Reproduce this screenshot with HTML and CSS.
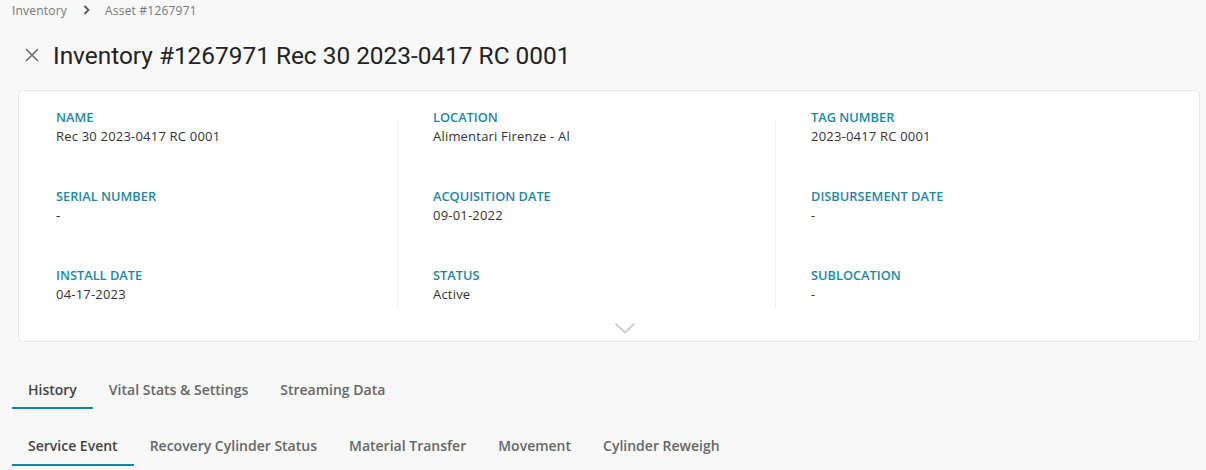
FILE: index.html
```html
<!DOCTYPE html>
<html lang="en">
<head>
    <meta charset="UTF-8">
    <meta name="viewport" content="width=device-width, initial-scale=1.0">
    <title>Asset #1267971</title>
    <link rel="stylesheet" href="styles.css">
</head>
<body>
    <!-- breadcrumb -->
    <div class="crumbs">
        <a href="javascript:;">Inventory</a>
        <svg class="crumb_sep" width="7" height="10" viewBox="0 0 7 10"><path d="M1.5 1l4 4-4 4" fill="none" stroke="#555" stroke-width="1.8"/></svg>
        <span>Asset #1267971</span>
    </div>

    <div class="title_row">
        <a href="javascript:;" class="close_btn">
            <svg width="14" height="14" viewBox="0 0 14 14"><path d="M1 1l12 12M13 1L1 13" stroke="#6b6b6b" stroke-width="1.6"/></svg>
        </a>
        <h1>Inventory #1267971 Rec 30 2023-0417 RC 0001</h1>
    </div>

    <div class="card">
        <div class="cols">
            <div class="col">
                <div class="field"><div class="label">NAME</div><div class="value">Rec 30 2023-0417 RC 0001</div></div>
                <div class="field"><div class="label">SERIAL NUMBER</div><div class="value">-</div></div>
                <div class="field"><div class="label">INSTALL DATE</div><div class="value">04-17-2023</div></div>
            </div>
            <div class="col">
                <div class="field"><div class="label">LOCATION</div><div class="value">Alimentari Firenze - Al</div></div>
                <div class="field"><div class="label">ACQUISITION DATE</div><div class="value">09-01-2022</div></div>
                <div class="field"><div class="label">STATUS</div><div class="value">Active</div></div>
            </div>
            <div class="col">
                <div class="field"><div class="label">TAG NUMBER</div><div class="value">2023-0417 RC 0001</div></div>
                <div class="field"><div class="label">DISBURSEMENT DATE</div><div class="value">-</div></div>
                <div class="field"><div class="label">SUBLOCATION</div><div class="value">-</div></div>
            </div>
        </div>
        <div class="more">
            <svg width="22" height="12" viewBox="0 0 22 12"><path d="M1.5 1.5l9.5 9 9.5-9" fill="none" stroke="#cfcfcf" stroke-width="2"/></svg>
        </div>
    </div>

    <ul class="tabs">
        <li class="active"><a href="javascript:;">History</a></li>
        <li><a href="javascript:;">Vital Stats &amp; Settings</a></li>
        <li><a href="javascript:;">Streaming Data</a></li>
    </ul>
    <ul class="tabs sub_tabs">
        <li class="active"><a href="javascript:;">Service Event</a></li>
        <li><a href="javascript:;">Recovery Cylinder Status</a></li>
        <li><a href="javascript:;">Material Transfer</a></li>
        <li><a href="javascript:;">Movement</a></li>
        <li><a href="javascript:;">Cylinder Reweigh</a></li>
    </ul>
</body>
</html>
```

FILE: styles.css
```css
*{
    margin: 0;
    padding: 0;
    box-sizing: border-box;
}
ul{
    list-style: none;
}
a{
    text-decoration: none;
    color: inherit;
}
body{
    background-color: #f8f8f8;
    font-family: "Open Sans", "Liberation Sans", sans-serif;
    color: #333;
    overflow: hidden;
}
.crumbs{
    display: flex;
    align-items: center;
    height: 20px;
    padding-left: 12px;
    font-size: 12px;
    letter-spacing: 0.2px;
    color: #777;
}
.crumb_sep{
    margin: 0 15px 0 16px;
}
.title_row{
    display: flex;
    align-items: center;
    height: 32px;
    margin-top: 19px;
    padding-left: 25px;
}
.close_btn{
    display: flex;
    width: 14px;
    height: 14px;
    margin-right: 14px;
}
.title_row h1{
    font-family: Roboto, "Liberation Sans", sans-serif;
    font-size: 24.4px;
    font-weight: 400;
    color: #222;
}
.card{
    margin: 19px 6px 0 18px;
    background-color: #fff;
    border: 1px solid #e8e8ee;
    border-radius: 4px;
}
.cols{
    display: grid;
    grid-template-columns: repeat(3, 378px);
    padding-top: 18px;
}
.col{
    padding: 0 0 5px 37px;
}
.col + .col{
    /* divider starts a little below the first label */
    background: linear-gradient(#f0f0f0, #f0f0f0) left 11px / 1px calc(100% - 11px) no-repeat;
    padding-left: 36px;
}
.field + .field{
    margin-top: 43px;
}
.label{
    font-size: 12.8px;
    line-height: 17px;
    font-weight: 600;
    color: #1d87a1;
}
.value{
    margin-top: 2px;
    font-size: 13px;
    line-height: 17px;
    letter-spacing: 0.2px;
    color: #333;
}
.more{
    display: flex;
    justify-content: center;
    padding: 14px 0 8px 32px;
    height: 33px;
}
.tabs{
    display: flex;
    margin: 31px 0 0 12px;
}
.tabs li a{
    display: block;
    padding: 7px 16px;
    font-size: 14px;
    line-height: 20px;
    font-weight: 600;
    color: #666;
    border-bottom: 2px solid transparent;
}
.tabs li.active a{
    color: #444;
    border-bottom-color: #0e8b9c;
}
.sub_tabs{
    margin-top: 19px;
}
.sub_tabs li a{
    padding: 8px 16px;
}
```
